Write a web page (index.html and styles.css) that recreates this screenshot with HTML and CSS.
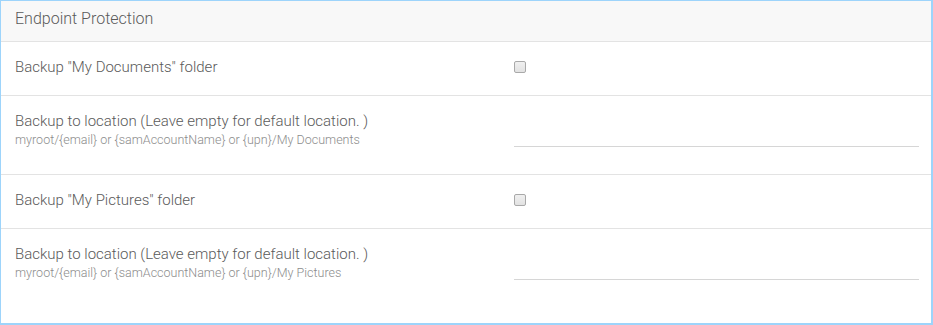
FILE: index.html
```html
<!DOCTYPE html>
<html lang="en">
<head>
  <meta charset="UTF-8">
  <title>Endpoint Protection</title>
  <link rel="stylesheet" href="styles.css">
</head>
<body>

  <section class="panel">
    <header class="panel-head">Endpoint Protection</header>

    <div class="field">
      <label class="field-label">Backup "My Documents" folder</label>
      <div class="field-control"><input type="checkbox" class="check"></div>
    </div>

    <div class="field tall">
      <label class="field-label">
        Backup to location (Leave empty for default location. )
        <small>myroot/{email} or {samAccountName} or {upn}/My Documents</small>
      </label>
      <div class="field-control"><input type="text" class="line-input"></div>
    </div>

    <div class="field">
      <label class="field-label">Backup "My Pictures" folder</label>
      <div class="field-control"><input type="checkbox" class="check"></div>
    </div>

    <div class="field tall last">
      <label class="field-label">
        Backup to location (Leave empty for default location. )
        <small>myroot/{email} or {samAccountName} or {upn}/My Pictures</small>
      </label>
      <div class="field-control"><input type="text" class="line-input"></div>
    </div>
  </section>

</body>
</html>
```

FILE: styles.css
```css
:root {
  --text: #5a5a5a;
  --muted: #8c8c8c;
  --line: #e3e3e3;
  --frame: #9dd4fb;
}
* {
  box-sizing: border-box;
}
body {
  margin: 0;
  font-family: Roboto, "Liberation Sans", sans-serif;
  font-weight: 300;
  color: var(--text);
  background: #fff;
}
.panel {
  width: 933px;
  height: 325px;
  border: 2px solid var(--frame);
  border-top-width: 1px;
  border-left-width: 1px;
  background: #fff;
  overflow: hidden;
}
.panel-head {
  height: 41px;
  padding: 8px 0 0 14px;
  font-size: 16px;
  background: #f8f8f8;
  border-bottom: 1px solid var(--line);
}
.field {
  display: grid;
  grid-template-columns: 499px 1fr;
  align-items: start;
  height: 54px;
  padding: 15px 12px 0 14px;
  border-bottom: 1px solid var(--line);
}
.field.tall {
  height: 79px;
}
.field.last {
  border-bottom: none;
}
.field-label {
  font-size: 15px;
  line-height: 20px;
}
.field-label small {
  display: block;
  font-size: 12.5px;
  line-height: 18px;
  color: var(--muted);
}
.field-control {
  display: flex;
  align-items: center;
  padding-top: 4px;
}
.tall .field-control {
  padding-top: 22px;
}
.check {
  appearance: none;
  width: 12px;
  height: 12px;
  margin: 0;
  border: 1px solid #a9a9a9;
  border-radius: 2px;
  background: linear-gradient(#f0f0f0, #e2e2e2);
}
.line-input {
  width: 100%;
  height: 14px;
  padding: 0;
  border: none;
  border-bottom: 1px solid #d6d6d6;
  outline: none;
  background: transparent;
}
```
